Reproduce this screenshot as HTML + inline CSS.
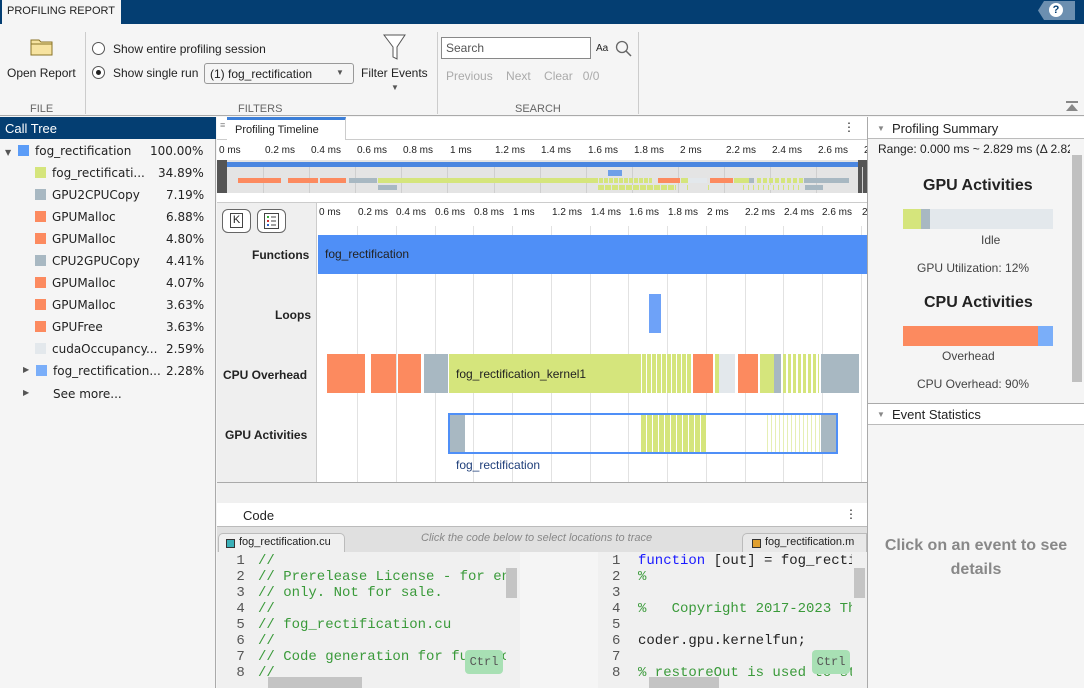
<!DOCTYPE html>
<html><head><meta charset="utf-8"><style>
*{box-sizing:border-box;margin:0;padding:0}
body{width:1084px;height:688px;overflow:hidden;position:relative;font-family:"Liberation Sans",sans-serif;font-size:12px;color:#222;background:#f5f5f5}
.a{position:absolute}
.t{position:absolute;white-space:nowrap}
.tk{position:absolute;white-space:nowrap;font-size:10px}
.mono{font-family:"Liberation Mono",monospace;font-size:14px}
.g{color:#3a9a3a}
</style></head><body>
<!-- top bar -->
<div class="a" style="left:0;top:0;width:1084px;height:24px;background:#043e72"></div>
<div class="a" style="left:2px;top:0;width:119px;height:24px;background:#f5f5f5"></div>
<div class="t" style="left:7px;top:5px;font-size:11px;color:#222">PROFILING REPORT</div>
<div class="a" style="left:1038px;top:1px;width:37px;height:19px;background:#6c8fb0;clip-path:polygon(6px 0,100% 0,100% 100%,6px 100%,0 50%)"></div>
<div class="a" style="left:1049px;top:3px;width:14px;height:14px;border-radius:50%;background:#fff;color:#043e72;font-weight:bold;font-size:11px;text-align:center;line-height:14px">?</div>
<!-- toolstrip -->
<div class="a" style="left:0;top:24px;width:1084px;height:92px;background:#f5f5f5;border-bottom:1px solid #aaa"></div>
<svg class="a" style="left:30px;top:37px" width="24" height="20"><path d="M1 3h8l2 2h11v13H1z" fill="#f7e3a0" stroke="#8a7428"/><path d="M1 7h21" stroke="#8a7428"/></svg>
<div class="t" style="left:7px;top:66px">Open Report</div>
<div class="t" style="left:30px;top:103px;color:#666;font-size:11px">FILE</div>
<div class="a" style="left:85px;top:32px;width:1px;height:82px;background:#ccc"></div>
<div class="a" style="left:92px;top:42px;width:13px;height:13px;border:1px solid #555;border-radius:50%;background:#fff"></div>
<div class="t" style="left:113px;top:42px">Show entire profiling session</div>
<div class="a" style="left:92px;top:66px;width:13px;height:13px;border:1px solid #555;border-radius:50%;background:#fff"></div>
<div class="a" style="left:96px;top:70px;width:5px;height:5px;border-radius:50%;background:#222"></div>
<div class="t" style="left:113px;top:66px">Show single run</div>
<div class="a" style="left:204px;top:63px;width:150px;height:21px;border:1px solid #999;border-radius:3px;background:#f5f5f5"></div>
<div class="t" style="left:210px;top:67px">(1) fog_rectification</div>
<div class="t" style="left:336px;top:68px;font-size:8px;color:#555">▼</div>
<svg class="a" style="left:383px;top:34px" width="24" height="28"><path d="M1 1h21l-8 12v12l-4-2V13z" fill="#fff" stroke="#555"/></svg>
<div class="t" style="left:361px;top:66px">Filter Events</div>
<div class="t" style="left:391px;top:83px;font-size:8px;color:#555">▼</div>
<div class="t" style="left:238px;top:103px;color:#666;font-size:11px">FILTERS</div>
<div class="a" style="left:437px;top:32px;width:1px;height:82px;background:#ccc"></div>
<div class="a" style="left:441px;top:37px;width:150px;height:22px;border:1px solid #888;background:#fff"></div>
<div class="t" style="left:446px;top:41px;color:#555">Search</div>
<div class="t" style="left:596px;top:43px;font-size:10px">Aa</div>
<svg class="a" style="left:615px;top:40px" width="18" height="18"><circle cx="7" cy="7" r="5.5" fill="none" stroke="#666" stroke-width="1.3"/><path d="M11 11l5 5" stroke="#666" stroke-width="1.5"/></svg>
<div class="t" style="left:446px;top:69px;color:#aaa">Previous&nbsp;&nbsp;&nbsp; Next&nbsp;&nbsp;&nbsp; Clear&nbsp;&nbsp; 0/0</div>
<div class="t" style="left:515px;top:103px;color:#666;font-size:11px">SEARCH</div>
<div class="a" style="left:638px;top:32px;width:1px;height:82px;background:#ccc"></div>
<svg class="a" style="left:1066px;top:101px" width="12" height="12"><rect x="0" y="0" width="12" height="2" fill="#888"/><path d="M6 3l6 7H0z" fill="#888"/></svg>
<!-- left call tree -->
<div class="a" style="left:0;top:117px;width:216px;height:571px;background:#f5f5f5;border-right:1px solid #aaa"></div>
<div class="a" style="left:0;top:117px;width:216px;height:22px;background:#043e72"></div>
<div class="t" style="left:5px;top:121px;color:#fff;font-size:13px">Call Tree</div>
<div style="font-family:'DejaVu Sans',sans-serif;font-size:12px">
<div class="t" style="left:5px;top:148px;font-size:8px;color:#555">▼</div>
<div class="a" style="left:18px;top:145px;width:11px;height:11px;background:#5b9cf7"></div>
<div class="t" style="left:35px;top:144px">fog_rectification</div><div class="t" style="left:150px;top:144px">100.00%</div>
<div class="a" style="left:35px;top:167px;width:11px;height:11px;background:#d5e57c"></div><div class="t" style="left:52px;top:166px">fog_rectificati...</div><div class="t" style="left:158px;top:166px">34.89%</div>
<div class="a" style="left:35px;top:189px;width:11px;height:11px;background:#a8b8c2"></div><div class="t" style="left:52px;top:188px">GPU2CPUCopy</div><div class="t" style="left:166px;top:188px">7.19%</div>
<div class="a" style="left:35px;top:211px;width:11px;height:11px;background:#fc8a5f"></div><div class="t" style="left:52px;top:210px">GPUMalloc</div><div class="t" style="left:166px;top:210px">6.88%</div>
<div class="a" style="left:35px;top:233px;width:11px;height:11px;background:#fc8a5f"></div><div class="t" style="left:52px;top:232px">GPUMalloc</div><div class="t" style="left:166px;top:232px">4.80%</div>
<div class="a" style="left:35px;top:255px;width:11px;height:11px;background:#a8b8c2"></div><div class="t" style="left:52px;top:254px">CPU2GPUCopy</div><div class="t" style="left:166px;top:254px">4.41%</div>
<div class="a" style="left:35px;top:277px;width:11px;height:11px;background:#fc8a5f"></div><div class="t" style="left:52px;top:276px">GPUMalloc</div><div class="t" style="left:166px;top:276px">4.07%</div>
<div class="a" style="left:35px;top:299px;width:11px;height:11px;background:#fc8a5f"></div><div class="t" style="left:52px;top:298px">GPUMalloc</div><div class="t" style="left:166px;top:298px">3.63%</div>
<div class="a" style="left:35px;top:321px;width:11px;height:11px;background:#fc8a5f"></div><div class="t" style="left:52px;top:320px">GPUFree</div><div class="t" style="left:166px;top:320px">3.63%</div>
<div class="a" style="left:35px;top:343px;width:11px;height:11px;background:#e3e8ec"></div><div class="t" style="left:52px;top:342px">cudaOccupancy...</div><div class="t" style="left:166px;top:342px">2.59%</div>
<div class="t" style="left:23px;top:365px;font-size:8px;color:#555">▶</div>
<div class="a" style="left:36px;top:365px;width:11px;height:11px;background:#7aaef9"></div><div class="t" style="left:53px;top:364px">fog_rectification...</div><div class="t" style="left:166px;top:364px">2.28%</div>
<div class="t" style="left:23px;top:388px;font-size:8px;color:#555">▶</div><div class="t" style="left:53px;top:387px">See more...</div>
</div>
<!-- center timeline panel -->
<div class="a" style="left:217px;top:117px;width:650px;height:386px;background:#fff;border-bottom:1px solid #aaa"></div>
<div class="a" style="left:217px;top:139px;width:650px;height:1px;background:#ccc"></div>
<div class="a" style="left:227px;top:117px;width:119px;height:23px;background:#fff;border-right:1px solid #ccc;border-top:3px solid #3c7fd8"></div>
<div class="t" style="left:220px;top:120px;font-size:9px;color:#888">≡</div>
<div class="t" style="left:235px;top:124px;font-size:11px">Profiling Timeline</div>
<div class="t" style="left:843px;top:120px;font-size:12px">⋮</div>
<!-- overview -->
<div class="a" style="left:217px;top:160px;width:650px;height:33px;background:#e4e4e4"></div>
<div class="a" style="left:217px;top:160px;width:10px;height:33px;background:#555"></div>
<div class="a" style="left:858px;top:160px;width:9px;height:33px;background:#555"></div>
<div class="a" style="left:227px;top:162px;width:631px;height:5px;background:#4a86e0"></div>
<div class="a" style="left:608px;top:170px;width:14px;height:6px;background:#6e9fe8"></div>
<div id="ov"></div>
<div class="tk" style="left:219px;top:145px">0 ms</div><div class="tk" style="left:265px;top:145px">0.2 ms</div><div class="tk" style="left:311px;top:145px">0.4 ms</div><div class="tk" style="left:357px;top:145px">0.6 ms</div><div class="tk" style="left:403px;top:145px">0.8 ms</div><div class="tk" style="left:450px;top:145px">1 ms</div><div class="tk" style="left:495px;top:145px">1.2 ms</div><div class="tk" style="left:541px;top:145px">1.4 ms</div><div class="tk" style="left:588px;top:145px">1.6 ms</div><div class="tk" style="left:634px;top:145px">1.8 ms</div><div class="tk" style="left:680px;top:145px">2 ms</div><div class="tk" style="left:726px;top:145px">2.2 ms</div><div class="tk" style="left:772px;top:145px">2.4 ms</div><div class="tk" style="left:818px;top:145px">2.6 ms</div><div class="tk" style="left:864px;top:145px">2</div>
<div class="a" style="left:217px;top:202px;width:650px;height:1px;background:#ccc"></div>
<!-- lanes -->
<div class="a" style="left:217px;top:203px;width:100px;height:279px;background:#efefef;border-right:1px solid #ccc"></div>
<div class="a" style="left:222px;top:209px;width:29px;height:24px;border:1px solid #666;border-radius:6px;background:#fff"></div>
<div class="a" style="left:230px;top:213px;width:13px;height:15px;border:1px solid #444;font-size:11px;text-align:center;line-height:13px">K</div>
<div class="a" style="left:257px;top:209px;width:29px;height:24px;border:1px solid #666;border-radius:6px;background:#fff"></div>
<svg class="a" style="left:264px;top:213px" width="15" height="16"><rect x="0.5" y="0.5" width="14" height="15" fill="#fff" stroke="#444"/><rect x="3" y="3" width="2" height="2" fill="#3a3"/><rect x="3" y="7" width="2" height="2" fill="#c33"/><rect x="3" y="11" width="2" height="2" fill="#36c"/><path d="M7 4h5M7 8h5M7 12h5" stroke="#444"/></svg>
<div id="grid"></div>
<div class="tk" style="left:319px;top:207px">0 ms</div><div class="tk" style="left:358px;top:207px">0.2 ms</div><div class="tk" style="left:396px;top:207px">0.4 ms</div><div class="tk" style="left:435px;top:207px">0.6 ms</div><div class="tk" style="left:474px;top:207px">0.8 ms</div><div class="tk" style="left:513px;top:207px">1 ms</div><div class="tk" style="left:552px;top:207px">1.2 ms</div><div class="tk" style="left:591px;top:207px">1.4 ms</div><div class="tk" style="left:629px;top:207px">1.6 ms</div><div class="tk" style="left:668px;top:207px">1.8 ms</div><div class="tk" style="left:707px;top:207px">2 ms</div><div class="tk" style="left:745px;top:207px">2.2 ms</div><div class="tk" style="left:784px;top:207px">2.4 ms</div><div class="tk" style="left:822px;top:207px">2.6 ms</div><div class="tk" style="left:862px;top:207px">2</div>
<div class="a" style="left:318px;top:235px;width:549px;height:39px;background:#4f8ff7"></div>
<div class="t" style="left:325px;top:247px;font-size:12px">fog_rectification</div>
<div class="t" style="left:252px;top:248px;font-weight:bold;font-size:12px">Functions</div>
<div class="t" style="left:275px;top:308px;font-weight:bold;font-size:12px">Loops</div>
<div class="a" style="left:649px;top:294px;width:12px;height:39px;background:#6ea2f8"></div>
<div class="t" style="left:223px;top:368px;font-weight:bold;font-size:12px">CPU Overhead</div>
<div class="t" style="left:225px;top:428px;font-weight:bold;font-size:12px">GPU Activities</div>
<div id="cpu"></div>
<div class="a" style="left:448px;top:413px;width:390px;height:41px;border:2px solid #4f8ff7"></div>
<div class="a" style="left:450px;top:415px;width:15px;height:37px;background:#a8b8c2"></div>
<div class="a" style="left:821px;top:415px;width:15px;height:37px;background:#a8b8c2"></div>
<div class="a" style="left:641px;top:415px;width:66px;height:37px;background:repeating-linear-gradient(90deg,#d5e57c 0 5px,#fff 5px 6px)"></div>
<div class="a" style="left:767px;top:415px;width:53px;height:37px;background:repeating-linear-gradient(90deg,#e6efb5 0 1px,#fff 1px 4px)"></div>
<div class="t" style="left:456px;top:458px;color:#1f3f7a;font-size:12px">fog_rectification</div>
<!-- code header -->
<div class="a" style="left:217px;top:503px;width:650px;height:24px;background:#fff;border-bottom:1px solid #bbb"></div>
<div class="t" style="left:243px;top:508px;font-size:13px">Code</div>
<div class="t" style="left:845px;top:507px">⋮</div>
<div class="a" style="left:217px;top:527px;width:650px;height:25px;background:#e0e0e0"></div>
<div class="a" style="left:218px;top:533px;width:127px;height:20px;background:#f0f0f0;border:1px solid #bbb;border-bottom:none;border-radius:5px 5px 0 0"></div>
<div class="a" style="left:226px;top:539px;width:9px;height:9px;background:#3ab0b8;border:1px solid #333"></div>
<div class="t" style="left:239px;top:536px;font-size:11px">fog_rectification.cu</div>
<div class="t" style="left:421px;top:532px;font-size:11px;font-style:italic;color:#888">Click the code below to select locations to trace</div>
<div class="a" style="left:742px;top:533px;width:125px;height:20px;background:#e8e8e8;border:1px solid #bbb;border-bottom:none;border-radius:5px 0 0 0"></div>
<div class="a" style="left:752px;top:539px;width:9px;height:9px;background:#e0a030;border:1px solid #333"></div>
<div class="t" style="left:765px;top:536px;font-size:11px">fog_rectification.m</div>
<div class="a" style="left:217px;top:552px;width:303px;height:136px;background:#f0f0f0"></div>
<div class="a" style="left:520px;top:552px;width:78px;height:136px;background:#f5f5f5"></div>
<div class="a" style="left:598px;top:552px;width:269px;height:136px;background:#f0f0f0"></div>
<div class="mono" style="position:absolute;left:228px;top:553px;line-height:16px;color:#555;white-space:pre"> 1
 2
 3
 4
 5
 6
 7
 8</div>
<div class="mono g" style="position:absolute;left:258px;top:553px;width:248px;overflow:hidden;line-height:16px;white-space:pre">//
// Prerelease License - for en
// only. Not for sale.
//
// fog_rectification.cu
//
// Code generation for function
//</div>
<div class="mono" style="position:absolute;left:612px;top:553px;line-height:16px;color:#555;white-space:pre">1
2
3
4
5
6
7
8</div>
<div class="mono" style="position:absolute;left:638px;top:553px;width:214px;overflow:hidden;line-height:16px;white-space:pre"><span style="color:#1a1aff">function</span> [out] = fog_rectif
<span class="g">%</span>

<span class="g">%   Copyright 2017-2023 The</span>

coder.gpu.kernelfun;

<span class="g">% restoreOut is used to st</span></div>
<div class="a" style="left:506px;top:568px;width:11px;height:30px;background:#c4c4c4"></div>
<div class="a" style="left:854px;top:568px;width:11px;height:30px;background:#c4c4c4"></div>
<div class="a" style="left:217px;top:676px;width:303px;height:12px;background:#f0f0f0"></div>
<div class="a" style="left:268px;top:677px;width:94px;height:11px;background:#c4c4c4"></div>
<div class="a" style="left:598px;top:676px;width:255px;height:12px;background:#f0f0f0"></div>
<div class="a" style="left:649px;top:677px;width:70px;height:11px;background:#c4c4c4"></div>
<div class="a" style="left:465px;top:650px;width:38px;height:24px;background:#a8e0b4;border-radius:4px;font-family:'Liberation Mono',monospace;font-size:12px;color:#555;text-align:center;line-height:24px">Ctrl</div>
<div class="a" style="left:812px;top:650px;width:38px;height:24px;background:#a8e0b4;border-radius:4px;font-family:'Liberation Mono',monospace;font-size:12px;color:#555;text-align:center;line-height:24px">Ctrl</div>
<!-- right panel -->
<div class="a" style="left:867px;top:117px;width:217px;height:571px;background:#f5f5f5;border-left:1px solid #aaa"></div>
<div class="a" style="left:868px;top:117px;width:216px;height:22px;background:#fff;border-bottom:1px solid #bbb"></div>
<div class="t" style="left:877px;top:124px;font-size:8px;color:#888">▼</div>
<div class="t" style="left:892px;top:121px;font-size:13px">Profiling Summary</div>
<div class="t" style="left:878px;top:142px;font-size:12px;width:192px;overflow:hidden">Range: 0.000 ms ~ 2.829 ms (Δ 2.829 ms)</div>
<div class="a" style="left:1072px;top:155px;width:10px;height:227px;background:#c0c0c0"></div>
<div class="t" style="left:923px;top:177px;font-size:16px;font-weight:bold">GPU Activities</div>
<div class="a" style="left:903px;top:209px;width:150px;height:20px;background:#e3e8ec"></div>
<div class="a" style="left:903px;top:209px;width:18px;height:20px;background:#d5e57c"></div>
<div class="a" style="left:921px;top:209px;width:9px;height:20px;background:#a8b8c2"></div>
<div class="t" style="left:981px;top:233px;color:#444">Idle</div>
<div class="t" style="left:917px;top:261px;color:#444">GPU Utilization: 12%</div>
<div class="t" style="left:924px;top:294px;font-size:16px;font-weight:bold">CPU Activities</div>
<div class="a" style="left:903px;top:326px;width:150px;height:20px;background:#7aaef9"></div>
<div class="a" style="left:903px;top:326px;width:135px;height:20px;background:#fc8a5f"></div>
<div class="t" style="left:942px;top:349px;color:#444">Overhead</div>
<div class="t" style="left:917px;top:377px;color:#444">CPU Overhead: 90%</div>
<div class="a" style="left:868px;top:403px;width:216px;height:22px;background:#fff;border-top:1px solid #aaa;border-bottom:1px solid #bbb"></div>
<div class="t" style="left:877px;top:410px;font-size:8px;color:#888">▼</div>
<div class="t" style="left:892px;top:407px;font-size:13px">Event Statistics</div>
<div class="a" style="left:868px;top:534px;width:216px;text-align:center;font-size:16px;font-weight:bold;color:#888;line-height:24px">Click on an event to see<br>details</div>
<script>
function r(p,x,y,w,h,c){var d=document.createElement('div');d.className='a';d.style.cssText='left:'+x+'px;top:'+y+'px;width:'+w+'px;height:'+h+'px;background:'+c;document.body.insertBefore(d,document.getElementById(p));}
var O='#fc8a5f',G='#d5e57c',Y='#a8b8c2',L='#e3e8ec';
for(var i=0;i<14;i++){r('ov',263+i*46.1,167,1,26,'#cfcfcf');}
[[238,43,O],[288,30,O],[320,26,O],[349,28,Y],[378,220,G],[599,53,'repeating-linear-gradient(90deg,#d5e57c 0 4px,#e4e4e4 4px 5px)'],[658,22,O],[681,7,G],[688,19,L],[710,23,O],[734,15,G],[749,5,Y],[757,46,'repeating-linear-gradient(90deg,#d5e57c 0 4px,#e4e4e4 4px 6px)'],[804,45,Y]].forEach(function(s){r('ov',s[0],178,s[1],5,s[2]);});
[[378,19,Y],[598,78,'repeating-linear-gradient(90deg,#d5e57c 0 6px,#e4e4e4 6px 7px)'],[687,1,G],[708,1,G],[743,60,'repeating-linear-gradient(90deg,#d5e57c 0 1px,#e4e4e4 1px 5px)'],[805,18,Y]].forEach(function(s){r('ov',s[0],185,s[1],5,s[2]);});
for(var i=0;i<14;i++){r('grid',357+i*38.75,226,1,256,'#e2e2e2');}
r('grid',217,482,650,21,'#f0f0f0');r('grid',217,482,650,1,'#aaa');
[[327,38,O],[371,25,O],[398,23,O],[424,24,Y],[449,192,G],[642,49,'repeating-linear-gradient(90deg,#d5e57c 0 4px,#fff 4px 5px)'],[693,20,O],[715,4,G],[719,16,L],[738,20,O],[760,14,G],[774,7,Y],[783,36,'repeating-linear-gradient(90deg,#d5e57c 0 3px,#fff 3px 5px)'],[821,38,Y]].forEach(function(s){r('cpu',s[0],354,s[1],39,s[2]);});
</script>
<div class="t" style="left:456px;top:367px;font-size:12px">fog_rectification_kernel1</div>
</body></html>
